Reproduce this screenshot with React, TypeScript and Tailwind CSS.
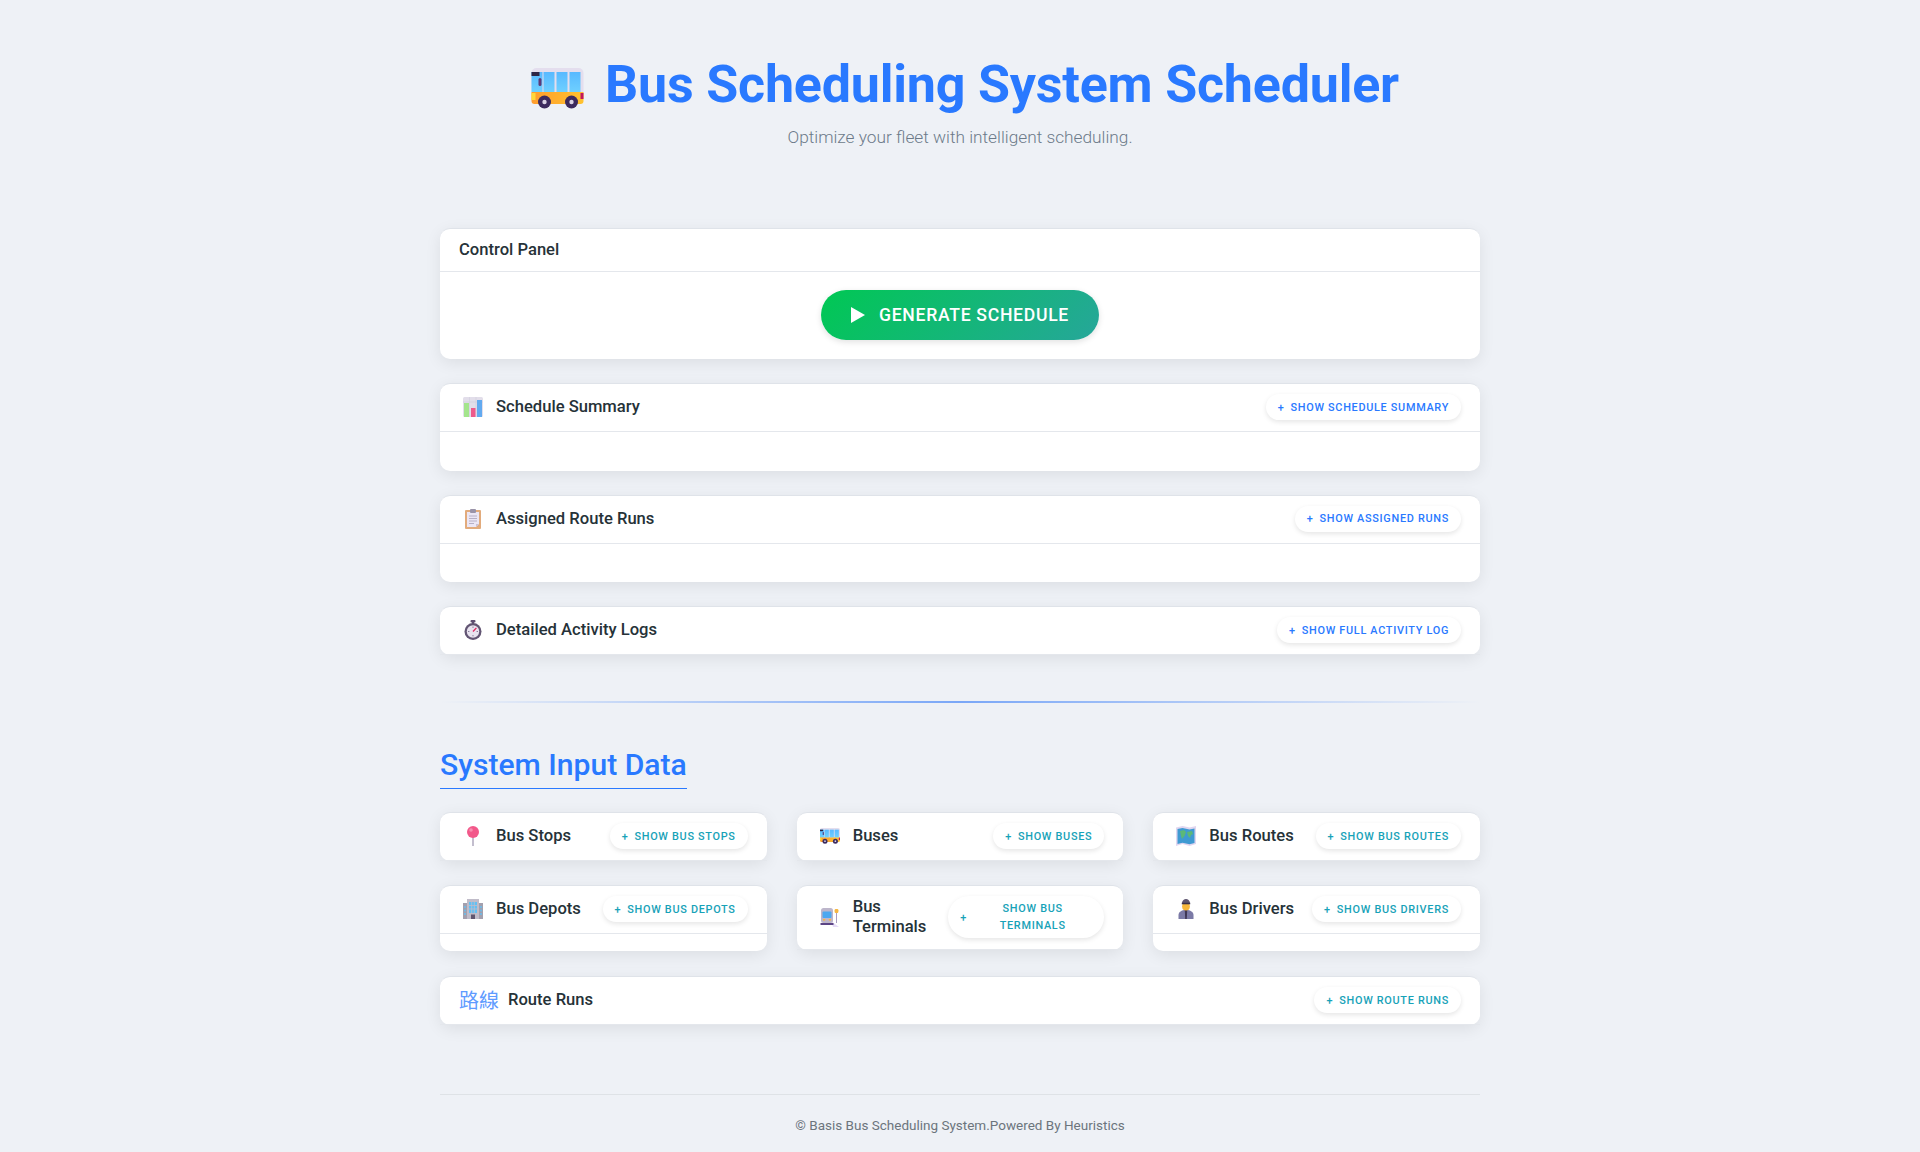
import type { ReactNode } from "react";

function BusIcon({ className }: { className: string }) {
  return (
    <svg viewBox="0 0 52 41" className={className}>
      <defs>
        <linearGradient id="busBody" x1="0" y1="0" x2="1" y2="0">
          <stop offset="0" stopColor="#ff9d2e" />
          <stop offset="1" stopColor="#ffc22e" />
        </linearGradient>
        <linearGradient id="busGlass" x1="0" y1="0" x2="0" y2="1">
          <stop offset="0" stopColor="#58b9ff" />
          <stop offset="1" stopColor="#6fd0ff" />
        </linearGradient>
      </defs>
      <path d="M5 0h42a5 5 0 0 1 5 5v20H0V5a5 5 0 0 1 5-5z" fill="#e4deee" />
      <path d="M0 24h52v9a3 3 0 0 1-3 3H3a3 3 0 0 1-3-3z" fill="url(#busBody)" />
      <rect x="0" y="4" width="11" height="20" fill="url(#busGlass)" />
      <rect x="0" y="4" width="8" height="4" fill="#2d2545" />
      <rect x="7" y="10" width="3" height="8" rx="1.5" fill="#5b3a78" />
      <rect x="12" y="4" width="11" height="20" fill="url(#busGlass)" />
      <rect x="25" y="4" width="11" height="20" fill="url(#busGlass)" />
      <rect x="38" y="4" width="11" height="20" fill="url(#busGlass)" />
      <rect x="0" y="25" width="4" height="7" fill="#ffd83a" />
      <rect x="49" y="25" width="3" height="6" fill="#c2185b" />
      <circle cx="13" cy="34" r="6.5" fill="#3c2a5e" />
      <circle cx="13" cy="34" r="2.2" fill="#d9d2e4" />
      <circle cx="40" cy="34" r="6.5" fill="#3c2a5e" />
      <circle cx="40" cy="34" r="2.2" fill="#d9d2e4" />
    </svg>
  );
}

function ChartIcon() {
  return (
    <svg viewBox="0 0 20 20" className="w-[20px] h-[20px]">
      <rect width="20" height="20" rx="1.500" fill="#e2deea" />
      <path d="M6.500 0v20M13 0v20M0 5h20" stroke="#d2cdde" strokeWidth="0.600" />
      <rect x="1" y="6" width="5" height="14" fill="#a4e58c" />
      <rect x="8" y="11" width="4.500" height="9" fill="#ee5a8c" />
      <rect x="14" y="3" width="5" height="17" fill="#62aaf0" />
    </svg>
  );
}

function ClipboardIcon() {
  return (
    <svg viewBox="0 0 20 20" className="w-[20px] h-[20px]">
      <rect x="2" y="1" width="16" height="19" rx="1" fill="#e2ab7c" />
      <path d="M4 3h12v12l-3 3H4z" fill="#ebe6f5" />
      <path d="M13 18l3-3h-3z" fill="#c9c0d6" />
      <rect x="7" y="0" width="6" height="4" rx="1" fill="#9a93a8" />
      <path d="M6 7h8M6 9.500h8M6 12h8M6 14.500h5" stroke="#a9a2ba" strokeWidth="0.800" />
    </svg>
  );
}

function StopwatchIcon() {
  return (
    <svg viewBox="0 0 20 20" className="w-[20px] h-[20px]">
      <rect x="7.500" y="0" width="5" height="2.500" rx="1" fill="#5e4f72" />
      <rect x="9" y="2" width="2" height="2" fill="#5e4f72" />
      <circle cx="10" cy="11.500" r="8.500" fill="#625573" />
      <circle cx="10" cy="11.500" r="6.200" fill="#e8e3ef" />
      <path d="M10 11.500l3.400-3.600" stroke="#e0245e" strokeWidth="1.300" />
      <path d="M10 6.500v1.400M10 15v1.400M5 11.500h1.400M13.600 11.500H15" stroke="#7d7190" strokeWidth="0.900" />
    </svg>
  );
}

function PinIcon() {
  return (
    <svg viewBox="0 0 20 20" className="w-[20px] h-[20px]">
      <rect x="9.200" y="9" width="1.600" height="11" fill="#b5aec2" />
      <circle cx="10" cy="6" r="6" fill="#f2588a" />
      <circle cx="8" cy="4" r="1.800" fill="#f98db0" />
    </svg>
  );
}

function BuildingIcon() {
  return (
    <svg viewBox="0 0 20 20" className="w-[20px] h-[20px]">
      <rect x="0" y="4" width="20" height="16" fill="#a3a0ae" />
      <rect x="4" y="0" width="12" height="20" fill="#c0bcc9" />
      <path d="M6 3h8v11H6z" fill="#62c0f4" />
      <path d="M6 6.500h8M6 10h8M8.700 3v11M11.300 3v11" stroke="#c0bcc9" strokeWidth="0.800" />
      <rect x="8" y="15.500" width="4" height="4.500" fill="#5f5670" />
      <path d="M2 7v9M18 7v9" stroke="#62c0f4" strokeWidth="1.400" strokeDasharray="2 1.500" />
    </svg>
  );
}

function MapIcon() {
  return (
    <svg viewBox="0 0 20 20" className="w-[20px] h-[20px]">
      <path d="M0 1.500l6.500-1.500 7 1.500L20 0v18l-6.500 2-7-2L0 20z" fill="#e0d6f0" />
      <path d="M1.500 3l5-1 7 1.500 5-1V17l-5 1.200-7-1.500-5 1.300z" fill="#3f9ad2" />
      <path d="M4 5l4-1 2 2-1.500 4-2.500 3-1-3zM11 6l5-1 1 3-2 1-1 3-2-2z" fill="#5cb878" />
    </svg>
  );
}

function TerminalIcon() {
  return (
    <svg viewBox="0 0 20 20" className="w-[20px] h-[20px]">
      <path d="M11 14l8 6h-6z" fill="#e6dcf7" />
      <rect x="1" y="1" width="12" height="15" rx="2.500" fill="#bdb6cb" />
      <rect x="2.500" y="4.500" width="9" height="6.500" rx="1" fill="#4ca8f0" />
      <rect x="3" y="12" width="2.200" height="1.600" fill="#f5b642" />
      <rect x="8.800" y="12" width="2.200" height="1.600" fill="#f5b642" />
      <rect x="0.500" y="16" width="13" height="2" fill="#5c4585" />
      <rect x="16" y="5" width="1" height="11" fill="#a99dc0" />
      <rect x="14.600" y="2" width="3.800" height="4" rx="1.200" fill="#f5b642" />
    </svg>
  );
}

function DriverIcon() {
  return (
    <svg viewBox="0 0 20 20" className="w-[20px] h-[20px]">
      <path d="M2.500 20v-4c0-3 3-5 7.500-5s7.500 2 7.500 5v4z" fill="#7b7aa6" />
      <path d="M8.800 11h2.400l-.4 9h-1.600z" fill="#3f3755" />
      <circle cx="10" cy="7.500" r="3.900" fill="#f6b73c" />
      <path d="M5.800 4.300C6.500 1 8 0 10 0s3.500 1 4.200 4.300z" fill="#5e5570" />
      <rect x="5.800" y="3.800" width="8.400" height="1.500" fill="#3a324c" />
    </svg>
  );
}

function ShowButton({
  label,
  color,
  wrap,
}: {
  label: string;
  color: "blue" | "teal";
  wrap?: boolean;
}) {
  const tone = color === "blue" ? "text-[#2979ff]" : "text-[#17a2b8]";
  return (
    <button
      className={`flex items-center shrink-0 rounded-[21px] bg-white px-[12px] text-[10.88px] font-medium tracking-[0.7px] uppercase shadow-[0_2px_5px_rgba(0,0,0,0.1)] ${tone} ${
        wrap ? "w-[156px] py-[4px] leading-[17px]" : "h-[26px] leading-[17px] whitespace-nowrap"
      }`}
    >
      <span className="mr-[6px]">+</span>
      <span className={wrap ? "flex-1 text-center" : ""}>{label}</span>
    </button>
  );
}

function Card({
  icon,
  title,
  button,
  body,
}: {
  icon: ReactNode;
  title: string;
  button: ReactNode;
  body?: string;
}) {
  return (
    <div className="rounded-[10px] bg-white border-t border-[#dfe3e9] shadow-[0_4px_16px_rgba(0,0,0,0.08)]">
      <div className="flex items-center justify-between gap-2 border-b border-[#e4e7ec] px-[19px] pt-[10px] pb-[11px]">
        <div className="flex items-center min-w-0">
          {icon}
          <span className="text-[16.6px] font-medium leading-[20px] text-[#263238]">{title}</span>
        </div>
        {button}
      </div>
      {body && <div className={body} />}
    </div>
  );
}

function IconBox({ children }: { children: ReactNode }) {
  return <span className="flex w-[28px] mr-[9px] shrink-0 items-center justify-center">{children}</span>;
}

export default function App() {
  return (
    <div className="min-h-[1152px] bg-[#eef1f6] font-['Roboto',sans-serif]">
      <div className="mx-auto w-[1040px] pt-[48px]">
        <header className="text-center">
          <h1 className="flex items-center justify-center text-[52px] font-bold leading-[74px] tracking-[-0.2px] text-[#2979ff]">
            <BusIcon className="w-[53px] h-[41px] ml-[10px] mr-[21px] mt-[6px]" />
            Bus Scheduling System Scheduler
          </h1>
          <p className="mt-[2px] text-[17.28px] font-light leading-[26px] text-[#6c7a89]">
            Optimize your fleet with intelligent scheduling.
          </p>
        </header>

        <div className="mt-[78px] flex flex-col gap-[24px]">
          <div className="rounded-[10px] bg-white border-t border-[#dfe3e9] shadow-[0_4px_16px_rgba(0,0,0,0.08)]">
            <div className="flex h-[43px] items-center border-b border-[#e4e7ec] px-[19px] text-[16.6px] font-medium text-[#263238]">
              Control Panel
            </div>
            <div className="flex justify-center pt-[18px] pb-[19px]">
              <button className="flex h-[50px] w-[278px] items-center justify-center rounded-full bg-[linear-gradient(135deg,#00c853,#26a69a)] text-[17.6px] font-medium tracking-[0.7px] text-white shadow-[0_2px_6px_rgba(0,0,0,0.12)]">
                <svg viewBox="0 0 14 16" className="w-[14px] h-[16px] mr-[14px]">
                  <path d="M0 0l14 8-14 8z" fill="#fff" />
                </svg>
                GENERATE SCHEDULE
              </button>
            </div>
          </div>

          <Card
            icon={<IconBox><ChartIcon /></IconBox>}
            title="Schedule Summary"
            button={<ShowButton label="Show Schedule Summary" color="blue" />}
            body="h-[38.5px]"
          />
          <Card
            icon={<IconBox><ClipboardIcon /></IconBox>}
            title="Assigned Route Runs"
            button={<ShowButton label="Show Assigned Runs" color="blue" />}
            body="h-[38.5px]"
          />
          <Card
            icon={<IconBox><StopwatchIcon /></IconBox>}
            title="Detailed Activity Logs"
            button={<ShowButton label="Show Full Activity Log" color="blue" />}
          />
        </div>

        <div className="mt-[46px] h-[2px] bg-[linear-gradient(90deg,transparent,#7aa7f7,transparent)]" />

        <h2 className="mt-[42px] inline-block border-b border-[#2979ff] pb-[3px] text-[30.1px] font-medium leading-[40px] text-[#2979ff]">
          System Input Data
        </h2>

        <div className="mt-[23px] grid grid-cols-3 items-start gap-x-[30px] gap-y-[24px]">
          <Card icon={<IconBox><PinIcon /></IconBox>} title="Bus Stops" button={<ShowButton label="Show Bus Stops" color="teal" />} />
          <Card icon={<IconBox><BusIcon className="w-[20px] h-[16px]" /></IconBox>} title="Buses" button={<ShowButton label="Show Buses" color="teal" />} />
          <Card icon={<IconBox><MapIcon /></IconBox>} title="Bus Routes" button={<ShowButton label="Show Bus Routes" color="teal" />} />
          <Card icon={<IconBox><BuildingIcon /></IconBox>} title="Bus Depots" button={<ShowButton label="Show Bus Depots" color="teal" />} body="h-[17px]" />
          <Card icon={<IconBox><TerminalIcon /></IconBox>} title="Bus Terminals" button={<ShowButton label="Show Bus Terminals" color="teal" wrap />} />
          <Card icon={<IconBox><DriverIcon /></IconBox>} title="Bus Drivers" button={<ShowButton label="Show Bus Drivers" color="teal" />} body="h-[17px]" />
        </div>

        <div className="mt-[25px]">
          <Card
            icon={
              <span className="mr-[9px] text-[20px] text-[#5f9bff] font-['Noto_Sans_CJK_TC',sans-serif] font-normal leading-[24px]">
                路線
              </span>
            }
            title="Route Runs"
            button={<ShowButton label="Show Route Runs" color="teal" />}
          />
        </div>

        <footer className="mt-[69px] border-t border-[#dee2e6] pt-[20px] text-center text-[13.5px] leading-[20px] text-[#6c757d]">
          © Basis Bus Scheduling System.Powered By Heuristics
        </footer>
      </div>
    </div>
  );
}
